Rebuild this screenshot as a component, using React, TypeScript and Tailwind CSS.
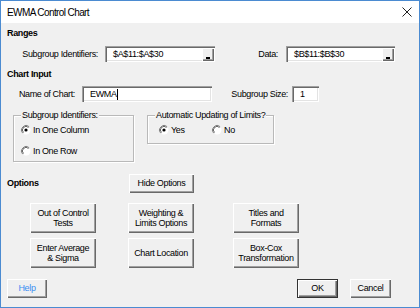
import React from "react";

const btn =
  "flex items-center justify-center text-center bg-[#f0f0f0] shadow-[inset_1px_1px_0_#ffffff,inset_-1px_-1px_0_#696969,inset_-2px_-2px_0_#a0a0a0]";
const field =
  "flex items-center bg-white pl-[8px] shadow-[inset_1px_1px_0_#a0a0a0,inset_2px_2px_0_#696969,inset_-1px_-1px_0_#ffffff,inset_-2px_-2px_0_#e3e3e3]";

function Radio({ checked }: { checked?: boolean }) {
  return (
    <svg width="12" height="12" viewBox="0 0 12 12" className="shrink-0">
      <circle cx="6" cy="6" r="4.5" fill="#ffffff" />
      <path d="M2.82 9.18 A4.5 4.5 0 0 1 9.18 2.82" fill="none" stroke="#808080" strokeWidth="1" />
      <path d="M3.5 8.5 A3.5 3.5 0 0 1 8.5 3.5" fill="none" stroke="#404040" strokeWidth="0.8" />
      {checked && <circle cx="6" cy="6" r="1.6" fill="#000" />}
    </svg>
  );
}

function RefBtn() {
  return (
    <div className={btn + " ml-auto mr-[1px] w-[12px] h-[13px] items-end pb-[2px]"}>
      <div className="w-[4px] h-[2px] bg-black" />
    </div>
  );
}

export default function App() {
  return (
    <div className="w-[420px] h-[308px] border border-[#4b8bd1] bg-[#f0f0f0] flex flex-col text-black text-[9px] leading-[11px] tracking-[-0.35px] font-['Liberation_Sans',Arial,sans-serif] overflow-hidden">
      {/* Title bar */}
      <div className="h-[22px] bg-white flex items-center justify-between pl-[6px] pr-[7px] shrink-0">
        <span className="text-[10px] tracking-[-0.6px] text-[#000]">EWMA Control Chart</span>
        <svg width="10" height="10" viewBox="0 0 10 10">
          <path d="M0.5 0.5 L9.5 9.5 M9.5 0.5 L0.5 9.5" stroke="#222" strokeWidth="1" />
        </svg>
      </div>

      {/* Ranges */}
      <div className="h-[20px] flex items-center pl-[6px] font-bold">Ranges</div>
      <div className="mt-[3px] h-[16px] flex items-center">
        <div className="w-[97px] text-right">Subgroup Identifiers:</div>
        <div className={field + " ml-[7px] w-[110px] h-[16px]"}>
          <span>$A$11:$A$30</span>
          <RefBtn />
        </div>
        <div className="w-[63px] text-right">Data:</div>
        <div className={field + " ml-[8px] w-[109px] h-[16px]"}>
          <span>$B$11:$B$30</span>
          <RefBtn />
        </div>
      </div>

      {/* Chart Input */}
      <div className="h-[24px] flex items-center pl-[6px] font-bold">Chart Input</div>
      <div className="h-[16px] flex items-center">
        <div className="w-[74px] text-right">Name of Chart:</div>
        <div className={field + " ml-[7px] w-[130px] h-[16px]"}>
          <span>EWMA</span>
          <div className="w-[1px] h-[11px] bg-black" />
        </div>
        <div className="w-[76px] text-right">Subgroup Size:</div>
        <div className={field + " ml-[4px] w-[27px] h-[16px]"}>
          <span>1</span>
        </div>
      </div>

      {/* Group boxes */}
      <div className="mt-[13px] flex items-start">
        <div className="relative ml-[12px] w-[121px] h-[47px] border border-[#b9b9b9] shadow-[1px_1px_0_#ffffff,inset_1px_1px_0_#ffffff] flex flex-col pl-[6px] pt-[8px]">
          <span className="absolute left-[7px] top-[-6px] px-[1px] bg-[#f0f0f0]">Subgroup Identifiers:</span>
          <div className="h-[12px] flex items-center gap-[1px]">
            <Radio checked />
            <span>In One Column</span>
          </div>
          <div className="mt-[9px] h-[12px] flex items-center gap-[1px]">
            <Radio />
            <span>In One Row</span>
          </div>
        </div>
        <div className="relative ml-[13px] w-[127px] h-[29px] border border-[#b9b9b9] shadow-[1px_1px_0_#ffffff,inset_1px_1px_0_#ffffff] flex pl-[10px] pt-[8px]">
          <span className="absolute left-[7px] top-[-6px] px-[1px] bg-[#f0f0f0]">Automatic Updating of Limits?</span>
          <div className="h-[12px] w-[53px] flex items-center gap-[1px]">
            <Radio checked />
            <span>Yes</span>
          </div>
          <div className="h-[12px] flex items-center gap-[1px]">
            <Radio />
            <span>No</span>
          </div>
        </div>
      </div>

      {/* Options */}
      <div className="mt-[12px] h-[19px] flex items-center">
        <div className="w-[128px] pl-[6px] font-bold">Options</div>
        <div className={btn + " w-[65px] h-[19px]"}>Hide Options</div>
      </div>

      <div className="mt-[10px] h-[30px] flex">
        <div className={btn + " ml-[29px] w-[66px] h-[30px] leading-[10px]"}>
          Out of Control<br />Tests
        </div>
        <div className={btn + " ml-[32px] w-[66px] h-[30px] leading-[10px]"}>
          Weighting &amp;<br />Limits Options
        </div>
        <div className={btn + " ml-[39px] w-[66px] h-[30px] leading-[10px]"}>
          Titles and<br />Formats
        </div>
      </div>
      <div className="mt-[5px] h-[30px] flex">
        <div className={btn + " ml-[29px] w-[66px] h-[30px] leading-[10px]"}>
          Enter Average<br />&amp; Sigma
        </div>
        <div className={btn + " ml-[32px] w-[66px] h-[30px]"}>Chart Location</div>
        <div className={btn + " ml-[39px] w-[66px] h-[30px] leading-[10px]"}>
          Box-Cox<br />Transformation
        </div>
      </div>

      {/* Bottom */}
      <div className="mt-[11px] h-[19px] flex">
        <div className={btn + " ml-[6px] w-[40px] h-[19px] text-[#3b8ef2]"}>Help</div>
        <div className={btn + " ml-[250px] w-[41px] h-[19px] border border-[#333]"}>OK</div>
        <div className={btn + " ml-[12px] w-[41px] h-[19px]"}>Cancel</div>
      </div>
    </div>
  );
}
